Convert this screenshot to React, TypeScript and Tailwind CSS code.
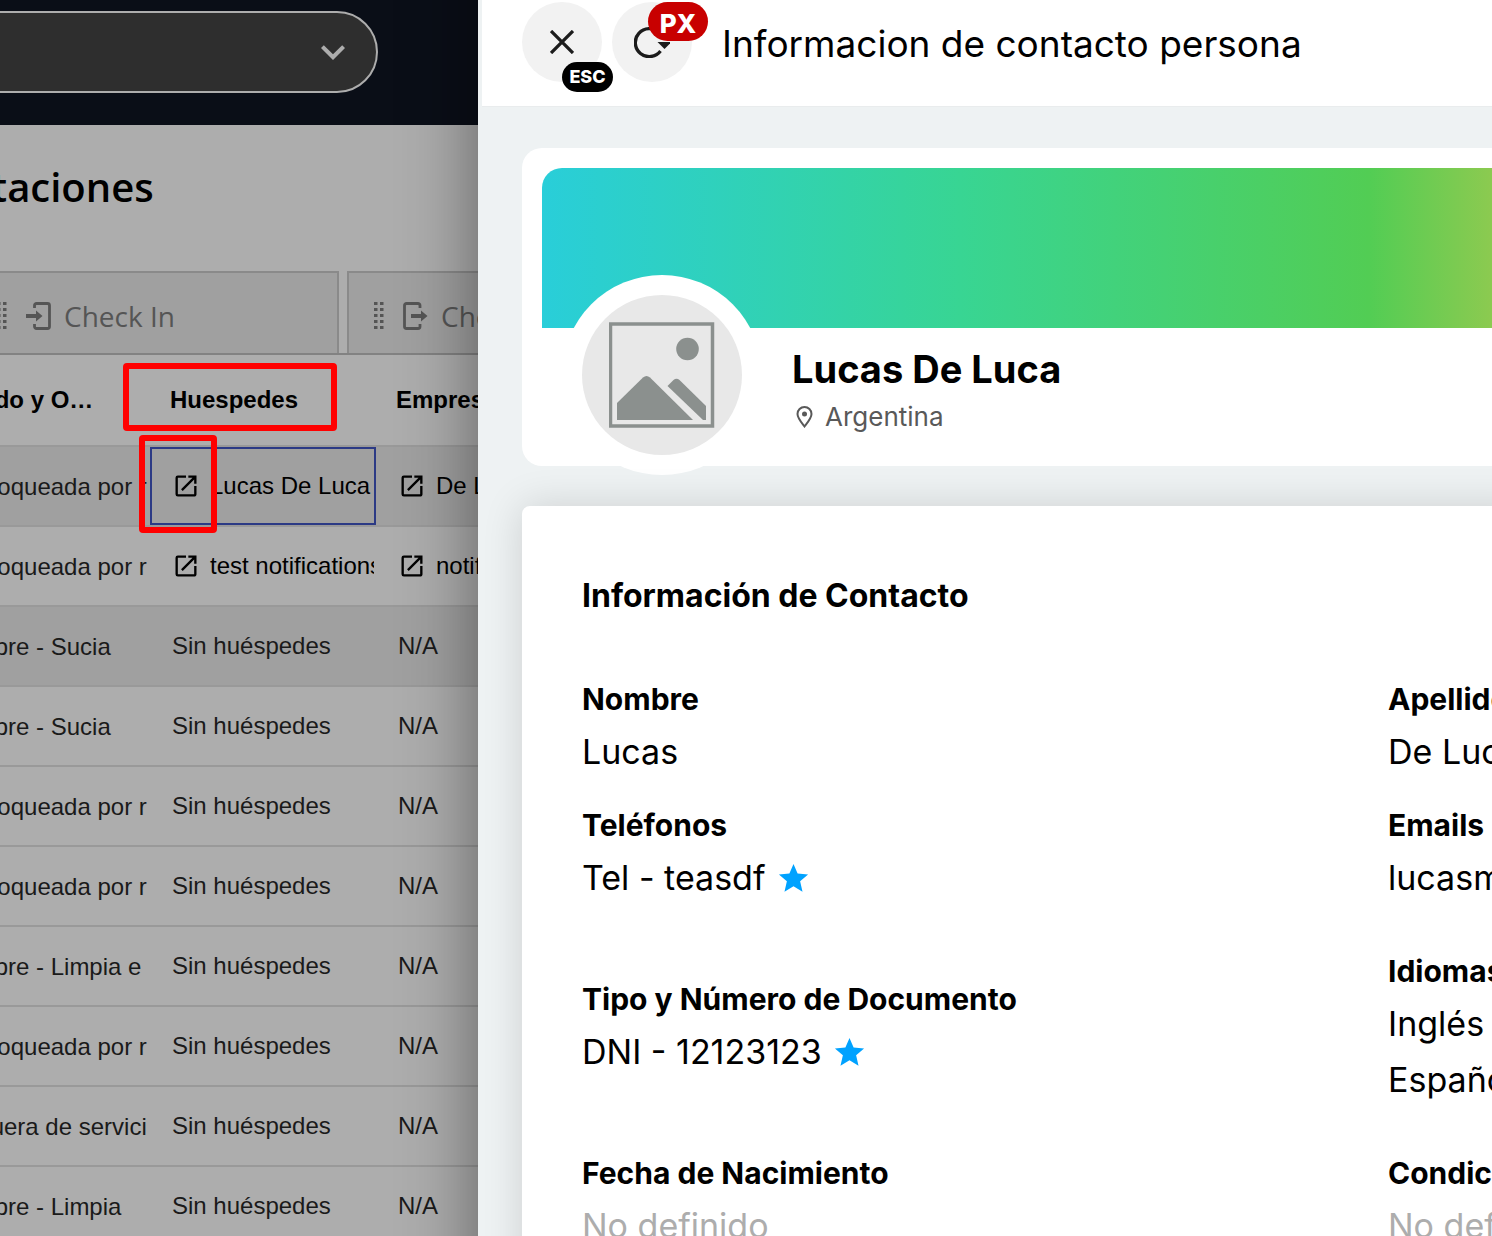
import type { ReactNode } from 'react'
import clsx from 'clsx'
import { MdExpandMore, MdOpenInNew, MdStar } from 'react-icons/md'

type Room = {
  status: string
  guest?: string
  company?: string
  shaded?: boolean
  selected?: boolean
}

const rooms: Room[] = [
  { status: 'Bloqueada por r', guest: 'Lucas De Luca', company: 'De Luca', shaded: true, selected: true },
  { status: 'Bloqueada por r', guest: 'test notifications', company: 'notifications' },
  { status: 'Libre - Sucia', shaded: true },
  { status: 'Libre - Sucia' },
  { status: 'Bloqueada por r' },
  { status: 'Bloqueada por r' },
  { status: 'Libre - Limpia e' },
  { status: 'Bloqueada por r' },
  { status: 'Fuera de servici' },
  { status: 'Libre - Limpia' },
]

type FieldData = { label: string; values: string[]; starred?: boolean; empty?: boolean; spaced?: boolean }

const fields: FieldData[] = [
  { label: 'Nombre', values: ['Lucas'] },
  { label: 'Apellido', values: ['De Luca'] },
  { label: 'Teléfonos', values: ['Tel - teasdf'], starred: true, spaced: true },
  { label: 'Emails', values: ['lucasm'], spaced: true },
  { label: 'Tipo y Número de Documento', values: ['DNI - 12123123'], starred: true, spaced: true },
  { label: 'Idiomas', values: ['Inglés', 'Español'], spaced: true },
  { label: 'Fecha de Nacimiento', values: ['No definido'], empty: true },
  { label: 'Condición', values: ['No definido'], empty: true },
]

function DragDots() {
  return (
    <svg width="11" height="28" viewBox="0 0 11 28" fill="currentColor" aria-hidden="true">
      {[0, 6, 12, 18, 24].map((y) => (
        <g key={y}>
          <rect x="0" y={y} width="3.500" height="3" />
          <rect x="6" y={y} width="3.500" height="3" />
        </g>
      ))}
    </svg>
  )
}

function CheckInIcon() {
  return (
    <svg width="26" height="28" viewBox="0 0 26 28" aria-hidden="true">
      <path d="M8.500 6V3.500a2 2 0 0 1 2-2h11a2 2 0 0 1 2 2v21a2 2 0 0 1-2 2h-11a2 2 0 0 1-2-2V22" fill="none" stroke="currentColor" strokeWidth="2.800" />
      <path d="M0 12h10V8.500l6.500 5.500-6.500 5.500V16H0z" fill="currentColor" />
    </svg>
  )
}

function CheckOutIcon() {
  return (
    <svg width="26" height="28" viewBox="0 0 26 28" aria-hidden="true">
      <path d="M17 6V3.500a2 2 0 0 0-2-2H3.500a2 2 0 0 0-2 2v21a2 2 0 0 0 2 2H15a2 2 0 0 0 2-2V22" fill="none" stroke="currentColor" strokeWidth="2.800" />
      <path d="M8 12h10V8.500l6.500 5.500-6.500 5.500V16H8z" fill="currentColor" />
    </svg>
  )
}

function Tab({ icon, children }: { icon: ReactNode; children: ReactNode }) {
  return (
    <button className="flex h-[82px] w-[369px] shrink-0 items-center border-2 border-b-0 border-[#8a8a8a] bg-[#a0a0a0] pt-[6px] pl-[25px] font-['Open_Sans',sans-serif] text-[28px] text-[#555]">
      <DragDots />
      <span className="ml-[18px]">{icon}</span>
      <span className="ml-3">{children}</span>
    </button>
  )
}

function LinkCell({ children }: { children: ReactNode }) {
  return (
    <a href="#" className="flex items-center gap-[10px] whitespace-nowrap text-black">
      <MdOpenInNew size={28} className="shrink-0" />
      {children}
    </a>
  )
}

function RoomRow({ room }: { room: Room }) {
  const td = 'border-b-2 border-[#999] p-0'
  const cell = 'flex h-[78px] items-center overflow-hidden whitespace-nowrap border-2 pl-5'
  return (
    <tr className={clsx(room.shaded && 'bg-[#a0a0a0]')}>
      <td className={td}>
        <div className="flex h-[78px] items-center whitespace-nowrap pt-[2px] pl-14">{room.status}</div>
      </td>
      <td className={td}>
        <div className={clsx(cell, room.selected ? 'border-[#2c3a85]' : 'border-transparent')}>
          {room.guest ? <LinkCell>{room.guest}</LinkCell> : 'Sin huéspedes'}
        </div>
      </td>
      <td className={td}>
        <div className={clsx(cell, 'border-transparent')}>
          {room.company ? <LinkCell>{room.company}</LinkCell> : 'N/A'}
        </div>
      </td>
    </tr>
  )
}

function RoomsPage() {
  const th = 'h-[92px] border-b-2 border-[#999] p-0 text-left font-bold text-black'
  return (
    <main className="relative w-[478px] shrink-0 overflow-hidden bg-[#adadad]">
      <header className="h-[125px] bg-[#0a0e17] pt-[11px]">
        <div className="relative -ml-12 w-[426px]">
          <select
            aria-label="Hotel"
            className="block h-[82px] w-full appearance-none rounded-full border-2 border-[#adadad] bg-[#2e2e2e]"
          />
          <MdExpandMore size={48} className="pointer-events-none absolute top-[17px] right-[21px] text-[#adadad]" />
        </div>
      </header>
      <h1 className="-ml-[98px] pt-[34px] font-['Open_Sans',sans-serif] text-[40px] leading-[56px] font-semibold text-black">
        Habitaciones
      </h1>
      <div className="-ml-[30px] flex gap-2 pt-14">
        <Tab icon={<CheckInIcon />}>Check In</Tab>
        <Tab icon={<CheckOutIcon />}>Check Out</Tab>
      </div>
      <table className="-ml-20 w-[730px] table-fixed border-separate border-spacing-0 border-t-2 border-[#828282] font-['Liberation_Sans',Arial,sans-serif] text-[24px] text-[#1a1a1a]">
        <thead>
          <tr>
            <th className={clsx(th, 'w-[230px] pl-6')}>Estado y O…</th>
            <th className={clsx(th, 'w-[226px] pl-5')}>Huespedes</th>
            <th className={clsx(th, 'pl-5')}>Empresa</th>
          </tr>
        </thead>
        <tbody>
          {rooms.map((room, i) => (
            <RoomRow key={i} room={room} />
          ))}
        </tbody>
      </table>
      {/* highlights */}
      <div className="absolute top-[363px] left-[123px] h-[68px] w-[214px] rounded-[4px] border-6 border-[#f00]" />
      <div className="absolute top-[435px] left-[139px] h-[98px] w-[78px] rounded-[4px] border-6 border-[#f00]" />
    </main>
  )
}

function PanelHeader() {
  return (
    <header className="ml-1 flex h-[107px] items-start border-b border-[#e9eced] bg-white pt-[2px] pl-10">
      <button aria-label="Cerrar" className="relative flex size-20 items-center justify-center rounded-full bg-[#f2f2f2]">
        <svg width="24" height="24" viewBox="0 0 24 24" stroke="#1c1c1c" strokeWidth="3.300" aria-hidden="true">
          <path d="M1 1l22 22M23 1L1 23" />
        </svg>
        <span className="absolute top-[60px] left-10 flex h-[30px] w-[51px] items-center justify-center rounded-full bg-black pb-[2px] text-[18px] font-extrabold text-white">
          ESC
        </span>
      </button>
      <button aria-label="Recargar" className="relative ml-[10px] flex size-20 items-center justify-center rounded-full bg-[#f2f2f2]">
        <svg width="36" height="32" viewBox="0 0 36 32" fill="none" aria-hidden="true">
          <path d="M25 6.500A14 14 0 1 0 26.500 25" stroke="#1c1c1c" strokeWidth="3.300" />
          <path d="M23.500 16h14L30.500 23z" fill="#1c1c1c" />
        </svg>
        <span className="absolute top-0 left-9 flex h-[39px] w-[60px] items-center justify-center rounded-full bg-[#c80000] pt-1 text-[26px] font-extrabold text-white">
          PX
        </span>
      </button>
      <h2 className="ml-[30px] pt-3 text-[37px] leading-[60px] whitespace-nowrap text-black">
        Informacion de contacto persona
      </h2>
    </header>
  )
}

function ProfileCard() {
  return (
    <section className="rounded-l-[20px] bg-white pt-5 pl-5">
      <div className="h-40 rounded-tl-[20px] bg-[linear-gradient(90deg,#29ced9_0%,#38d593_44%,#52cd54_87%,#8cca50_100%)]" />
      <div className="flex h-[138px] pl-5">
        <div className="-mt-[53px] flex size-[200px] shrink-0 items-center justify-center rounded-full bg-white">
          <div className="flex size-40 items-center justify-center rounded-full bg-[#e8e8e8]">
            <svg width="106" height="106" viewBox="0 0 106 106" fill="#8b908e" aria-hidden="true">
              <rect x="1.500" y="2" width="102" height="102" fill="none" stroke="#8b908e" strokeWidth="3.500" />
              <circle cx="78.500" cy="27" r="11.300" />
              <path d="M8 81L34 55.500q3.500-3 7 0L84 98H8z" />
              <path d="M58.500 64l6-6q3-2.500 6 0L97 84v14h-3z" />
            </svg>
          </div>
        </div>
        <div className="ml-[30px] pt-[15px]">
          <h3 className="text-[38px] leading-[52px] font-bold whitespace-nowrap text-black">Lucas De Luca</h3>
          <p className="flex items-center gap-3 pl-1 text-[26px] leading-[44px] text-[#595959]">
            <svg width="17" height="22" viewBox="0 0 17 22" aria-hidden="true">
              <path d="M8.500 20.500C5 16 1.500 12 1.500 8a7 7 0 0 1 14 0c0 4-3.500 8-7 12.500z" fill="none" stroke="currentColor" strokeWidth="2" />
              <circle cx="8.500" cy="8" r="2.500" fill="currentColor" />
            </svg>
            Argentina
          </p>
        </div>
      </div>
    </section>
  )
}

function Field({ field }: { field: FieldData }) {
  return (
    <div className={clsx('whitespace-nowrap', field.spaced && 'mb-5')}>
      <dt className="text-[30px] leading-[50px] font-bold text-black">{field.label}</dt>
      {field.values.map((value) => (
        <dd
          key={value}
          className={clsx('flex items-center gap-[10px] text-[34px] leading-[56px]', field.empty ? 'text-[#adadad]' : 'text-black')}
        >
          {value}
          {field.starred && <MdStar size={35} className="text-[#00a2ff]" />}
        </dd>
      ))}
    </div>
  )
}

function ContactPanel() {
  return (
    <aside className="min-w-0 flex-1 overflow-hidden bg-[#eef2f3] font-[Inter,sans-serif]">
      <PanelHeader />
      <div className="flex flex-col gap-10 pt-[41px] pl-11">
        <ProfileCard />
        <section className="-mr-10 rounded-l-lg bg-white pt-[66px] pb-16 pl-[60px] shadow-[0_0_40px_rgba(0,0,0,0.14)]">
          <h3 className="mb-[54px] text-[32px] leading-[48px] font-bold text-black">Información de Contacto</h3>
          <dl className="grid grid-cols-[806px_1fr] items-center gap-y-5">
            {fields.map((field) => (
              <Field key={field.label} field={field} />
            ))}
          </dl>
        </section>
      </div>
    </aside>
  )
}

export default function App() {
  return (
    <div className="flex h-screen overflow-hidden">
      <RoomsPage />
      {/* runs past both window edges so the side shadow stays even */}
      <div className="relative z-10 -my-20 flex min-w-0 flex-1 py-20 shadow-[0_0_70px_rgba(0,0,0,0.45)]">
        <ContactPanel />
      </div>
    </div>
  )
}
